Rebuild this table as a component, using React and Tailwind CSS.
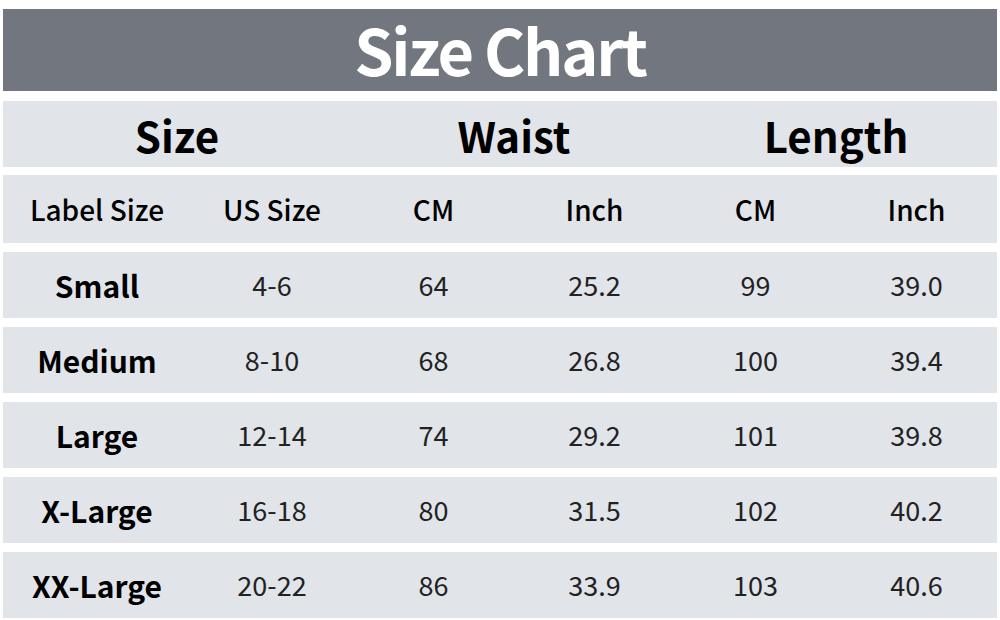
import React from "react";

// Size chart rows
const sizes = [
  { label: "Small", us: "4-6", waistCm: "64", waistIn: "25.2", lenCm: "99", lenIn: "39.0" },
  { label: "Medium", us: "8-10", waistCm: "68", waistIn: "26.8", lenCm: "100", lenIn: "39.4" },
  { label: "Large", us: "12-14", waistCm: "74", waistIn: "29.2", lenCm: "101", lenIn: "39.8" },
  { label: "X-Large", us: "16-18", waistCm: "80", waistIn: "31.5", lenCm: "102", lenIn: "40.2" },
  { label: "XX-Large", us: "20-22", waistCm: "86", waistIn: "33.9", lenCm: "103", lenIn: "40.6" },
];

const cols = "grid grid-cols-[188px_162px_161px_161px_161px_161px] items-center";

const App = () => {
  return (
    <div
      className="w-[1000px] h-[620px] bg-white pt-[9px] pl-[3px] pr-[3px] overflow-hidden"
      style={{ fontFamily: '"Noto Sans CJK SC", "Noto Sans", sans-serif' }}
    >
      {/* Title bar */}
      <div className="h-[82px] bg-[#72767f] flex items-center justify-center">
        <span className="text-white text-[63px] font-semibold leading-none tracking-[-2.2px] pb-[4px]">Size Chart</span>
      </div>

      {/* Group headings */}
      <div className={`${cols} mt-[10px] h-[66px] bg-[#e1e4e9] text-black text-[42px] font-semibold`}>
        <div className="col-span-2 text-center pr-[2px]">Size</div>
        <div className="col-span-2 text-center">Waist</div>
        <div className="col-span-2 text-center">Length</div>
      </div>

      {/* Column headings */}
      <div className={`${cols} mt-[8px] h-[68px] bg-[#e1e4e9] text-black text-[28px] font-medium`}>
        <div className="text-center">Label Size</div>
        <div className="text-center">US Size</div>
        <div className="text-center">CM</div>
        <div className="text-center">Inch</div>
        <div className="text-center">CM</div>
        <div className="text-center">Inch</div>
      </div>

      {/* Data rows */}
      {sizes.map((s) => (
        <div key={s.label} className={`${cols} mt-[9px] h-[66px] bg-[#e1e4e9] text-[#222] text-[27px]`}>
          <div className="text-center text-black text-[30px] font-semibold">{s.label}</div>
          <div className="text-center">{s.us}</div>
          <div className="text-center">{s.waistCm}</div>
          <div className="text-center">{s.waistIn}</div>
          <div className="text-center">{s.lenCm}</div>
          <div className="text-center">{s.lenIn}</div>
        </div>
      ))}
    </div>
  );
};

export default App;
